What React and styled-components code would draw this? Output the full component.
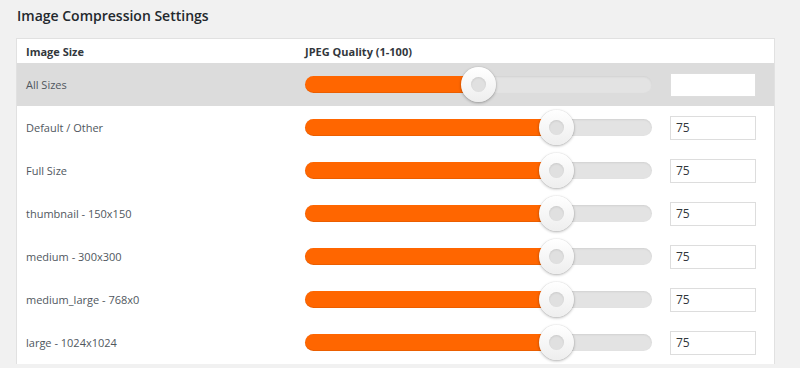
import styled, { createGlobalStyle } from "styled-components";

const GlobalStyle = createGlobalStyle`
    html, body {
        margin: 0;
        padding: 0;
        background: #f1f1f1;
    }
    body {
        font-family: "Open Sans", "Noto Sans", "DejaVu Sans", sans-serif;
        color: #23282d;
    }
`;

const sizes = [
    { label: "Default / Other", value: 75 },
    { label: "Full Size", value: 75 },
    { label: "thumbnail - 150x150", value: 75 },
    { label: "medium - 300x300", value: 75 },
    { label: "medium_large - 768x0", value: 75 },
    { label: "large - 1024x1024", value: 75 },
];

const Page = styled.div`
    padding: 7px 25px 0 16px;
    height: 368px;
    box-sizing: border-box;
    overflow: hidden;
`;

const Heading = styled.h2`
    margin: 0 0 13px 1px;
    font-size: 14px;
    font-weight: 600;
    line-height: 18px;
    color: #23282d;
`;

const Table = styled.div`
    background: #fff;
    border: 1px solid #e1e1e1;
    border-bottom: none;
`;

const Row = styled.div`
    display: grid;
    grid-template-columns: 288px 347px 86px;
    align-items: center;
    height: ${(p) => (p.$header ? "24px" : "43px")};
    background: ${(p) => (p.$active ? "#dcdcdc" : "#fff")};
`;

const Label = styled.div`
    padding-left: 9px;
    font-size: 11px;
    font-weight: ${(p) => (p.$bold ? 700 : 400)};
    color: ${(p) => (p.$bold ? "#32373c" : "#50575e")};
`;

const ColTitle = styled.div`
    font-size: 11px;
    font-weight: 700;
    color: #32373c;
`;

const Slider = styled.div`
    position: relative;
    height: 17px;
    border-radius: 9px;
    background: #e3e3e3;
    box-shadow: inset 0 1px 2px rgba(0, 0, 0, 0.08);
`;

const Fill = styled.div`
    height: 100%;
    border-radius: 9px 0 0 9px;
    background: #ff6600;
    box-shadow: inset 0 -1px 0 rgba(0, 0, 0, 0.08);
`;

const Knob = styled.div`
    position: absolute;
    top: 50%;
    width: 35px;
    height: 35px;
    margin: -17.5px 0 0 -17.5px;
    border-radius: 50%;
    background: linear-gradient(#ffffff, #eeeeee);
    box-shadow: 0 1px 3px rgba(0, 0, 0, 0.3), 0 0 1px rgba(0, 0, 0, 0.2);

    &::after {
        content: "";
        position: absolute;
        left: 10px;
        top: 10px;
        width: 15px;
        height: 15px;
        border-radius: 50%;
        background: #e0e0e0;
        box-shadow: inset 0 1px 2px rgba(0, 0, 0, 0.1);
    }
`;

const ValueBox = styled.div`
    box-sizing: border-box;
    width: 86px;
    height: 24px;
    margin-left: 18px;
    padding: 0 5px;
    border: 1px solid #dddddd;
    background: #fff;
    font-size: 12px;
    line-height: 22px;
    color: #32373c;
`;

function QualitySlider({ value }) {
    // knob travels between the two rounded ends
    const pos = 17 + (value / 100) * (347 - 34);
    return (
        <Slider>
            <Fill style={{ width: pos }} />
            <Knob style={{ left: pos }} />
        </Slider>
    );
}

export default function App() {
    return (
        <Page>
            <GlobalStyle />
            <Heading>Image Compression Settings</Heading>
            <Table>
                <Row $header>
                    <Label $bold>Image Size</Label>
                    <ColTitle>JPEG Quality (1-100)</ColTitle>
                </Row>
                <Row $active>
                    <Label>All Sizes</Label>
                    <QualitySlider value={50} />
                    <ValueBox />
                </Row>
                {sizes.map((s) => (
                    <Row key={s.label}>
                        <Label>{s.label}</Label>
                        <QualitySlider value={s.value} />
                        <ValueBox>{s.value}</ValueBox>
                    </Row>
                ))}
            </Table>
        </Page>
    );
}
